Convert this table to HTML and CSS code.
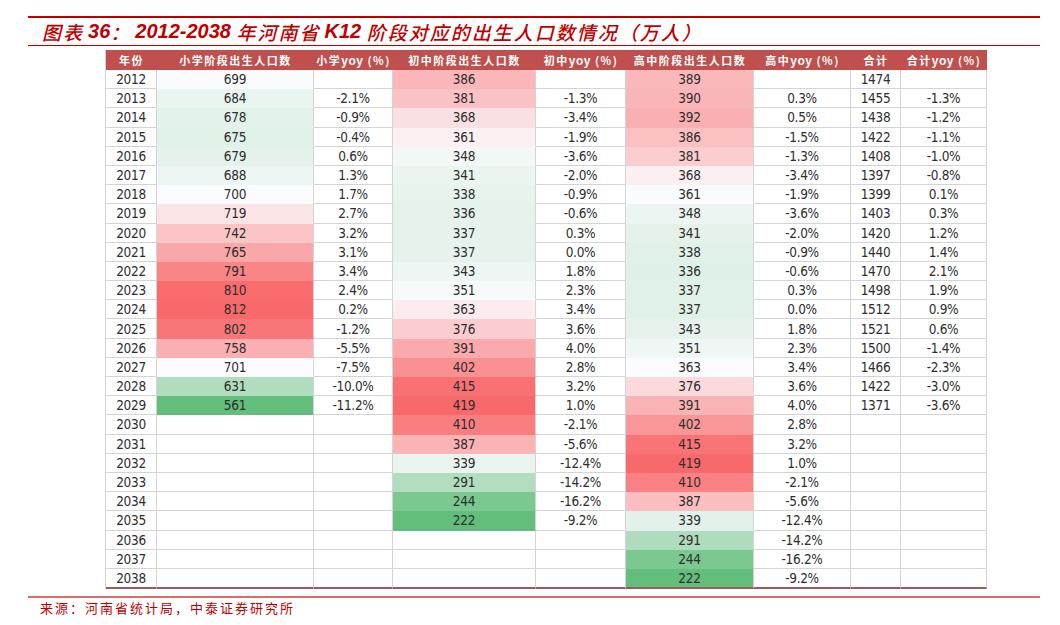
FILE: index.html
```html
<!DOCTYPE html>
<html lang="zh-CN">
<head>
<meta charset="utf-8">
<title>图表36</title>
<link rel="stylesheet" href="styles.css">
</head>
<body>
<div class="page">
  <div class="rule-top"></div>
  <h1 class="title"><span class="cn">图表</span><span class="lat">36</span><span class="cn">：</span><span class="lat">2012-2038 </span><span class="cn">年河南省</span><span class="lat">K12 </span><span class="cn">阶段对应的出生人口数情况（万人）</span></h1>
  <div class="rule-title"></div>
  <div class="table-wrap">
    <table class="grid" id="grid">
      <colgroup>
        <col class="c-year"><col class="c-pri"><col class="c-priy"><col class="c-mid"><col class="c-midy"><col class="c-high"><col class="c-highy"><col class="c-tot"><col class="c-toty">
      </colgroup>
      <thead>
        <tr><th>年份</th><th>小学阶段出生人口数</th><th>小学<span class="y">yoy</span> (%)</th><th>初中阶段出生人口数</th><th>初中<span class="y">yoy</span> (%)</th><th>高中阶段出生人口数</th><th>高中<span class="y">yoy</span> (%)</th><th>合计</th><th>合计<span class="y">yoy</span> (%)</th></tr>
      </thead>
      <tbody>
        <tr><td>2012</td><td>699</td><td></td><td>386</td><td></td><td>389</td><td></td><td>1474</td><td></td></tr>
        <tr><td>2013</td><td>684</td><td>-2.1%</td><td>381</td><td>-1.3%</td><td>390</td><td>0.3%</td><td>1455</td><td>-1.3%</td></tr>
        <tr><td>2014</td><td>678</td><td>-0.9%</td><td>368</td><td>-3.4%</td><td>392</td><td>0.5%</td><td>1438</td><td>-1.2%</td></tr>
        <tr><td>2015</td><td>675</td><td>-0.4%</td><td>361</td><td>-1.9%</td><td>386</td><td>-1.5%</td><td>1422</td><td>-1.1%</td></tr>
        <tr><td>2016</td><td>679</td><td>0.6%</td><td>348</td><td>-3.6%</td><td>381</td><td>-1.3%</td><td>1408</td><td>-1.0%</td></tr>
        <tr><td>2017</td><td>688</td><td>1.3%</td><td>341</td><td>-2.0%</td><td>368</td><td>-3.4%</td><td>1397</td><td>-0.8%</td></tr>
        <tr><td>2018</td><td>700</td><td>1.7%</td><td>338</td><td>-0.9%</td><td>361</td><td>-1.9%</td><td>1399</td><td>0.1%</td></tr>
        <tr><td>2019</td><td>719</td><td>2.7%</td><td>336</td><td>-0.6%</td><td>348</td><td>-3.6%</td><td>1403</td><td>0.3%</td></tr>
        <tr><td>2020</td><td>742</td><td>3.2%</td><td>337</td><td>0.3%</td><td>341</td><td>-2.0%</td><td>1420</td><td>1.2%</td></tr>
        <tr><td>2021</td><td>765</td><td>3.1%</td><td>337</td><td>0.0%</td><td>338</td><td>-0.9%</td><td>1440</td><td>1.4%</td></tr>
        <tr><td>2022</td><td>791</td><td>3.4%</td><td>343</td><td>1.8%</td><td>336</td><td>-0.6%</td><td>1470</td><td>2.1%</td></tr>
        <tr><td>2023</td><td>810</td><td>2.4%</td><td>351</td><td>2.3%</td><td>337</td><td>0.3%</td><td>1498</td><td>1.9%</td></tr>
        <tr><td>2024</td><td>812</td><td>0.2%</td><td>363</td><td>3.4%</td><td>337</td><td>0.0%</td><td>1512</td><td>0.9%</td></tr>
        <tr><td>2025</td><td>802</td><td>-1.2%</td><td>376</td><td>3.6%</td><td>343</td><td>1.8%</td><td>1521</td><td>0.6%</td></tr>
        <tr><td>2026</td><td>758</td><td>-5.5%</td><td>391</td><td>4.0%</td><td>351</td><td>2.3%</td><td>1500</td><td>-1.4%</td></tr>
        <tr><td>2027</td><td>701</td><td>-7.5%</td><td>402</td><td>2.8%</td><td>363</td><td>3.4%</td><td>1466</td><td>-2.3%</td></tr>
        <tr><td>2028</td><td>631</td><td>-10.0%</td><td>415</td><td>3.2%</td><td>376</td><td>3.6%</td><td>1422</td><td>-3.0%</td></tr>
        <tr><td>2029</td><td>561</td><td>-11.2%</td><td>419</td><td>1.0%</td><td>391</td><td>4.0%</td><td>1371</td><td>-3.6%</td></tr>
        <tr><td>2030</td><td></td><td></td><td>410</td><td>-2.1%</td><td>402</td><td>2.8%</td><td></td><td></td></tr>
        <tr><td>2031</td><td></td><td></td><td>387</td><td>-5.6%</td><td>415</td><td>3.2%</td><td></td><td></td></tr>
        <tr><td>2032</td><td></td><td></td><td>339</td><td>-12.4%</td><td>419</td><td>1.0%</td><td></td><td></td></tr>
        <tr><td>2033</td><td></td><td></td><td>291</td><td>-14.2%</td><td>410</td><td>-2.1%</td><td></td><td></td></tr>
        <tr><td>2034</td><td></td><td></td><td>244</td><td>-16.2%</td><td>387</td><td>-5.6%</td><td></td><td></td></tr>
        <tr><td>2035</td><td></td><td></td><td>222</td><td>-9.2%</td><td>339</td><td>-12.4%</td><td></td><td></td></tr>
        <tr><td>2036</td><td></td><td></td><td></td><td></td><td>291</td><td>-14.2%</td><td></td><td></td></tr>
        <tr><td>2037</td><td></td><td></td><td></td><td></td><td>244</td><td>-16.2%</td><td></td><td></td></tr>
        <tr><td>2038</td><td></td><td></td><td></td><td></td><td>222</td><td>-9.2%</td><td></td><td></td></tr>
      </tbody>
    </table>
  </div>
  <div class="rule-source"></div>
  <p class="source">来源：河南省统计局，中泰证券研究所</p>
</div>
<script src="script.js"></script>
</body>
</html>
```

FILE: styles.css
```css
html, body {
  margin: 0;
  padding: 0;
  background: #ffffff;
}

.page {
  width: 1012px;
  padding: 16px 0 0 28px;
}

.rule-top {
  height: 2px;
  background: #c00000;
}

.title {
  margin: 0;
  height: 27px;
  padding-left: 14px;
  display: flex;
  align-items: center;
  color: #c00000;
  font-size: 20px;
  font-weight: normal;
  white-space: nowrap;
}

.title .cn {
  font-family: "Noto Sans CJK SC", sans-serif;
  font-style: italic;
  font-weight: 500;
  font-size: 19px;
  letter-spacing: 2px;
}

.title .lat {
  font-family: "Liberation Sans", Arial, sans-serif;
  font-style: italic;
  font-weight: bold;
  white-space: pre;
  padding-left: 4px;
}

.rule-title {
  height: 1px;
  background: #c00000;
}

.table-wrap {
  margin: 4px 0 0 77px;
}

.grid {
  border-collapse: separate;
  border-spacing: 0;
  table-layout: fixed;
  width: 881px;
  border-left: 1px solid #d4d4d4;
  font-family: "DejaVu Sans Condensed", "Liberation Sans", sans-serif;
  font-size: 13.5px;
  letter-spacing: -0.3px;
  color: #2e2e2e;
}

.c-year { width: 51px; }
.c-pri { width: 157px; }
.c-priy { width: 79px; }
.c-mid { width: 143px; }
.c-midy { width: 90px; }
.c-high { width: 128px; }
.c-highy { width: 97px; }
.c-tot { width: 50px; }
.c-toty { width: 86px; }

.grid th {
  height: 20px;
  padding: 0;
  background: #c0504d;
  color: #ffffff;
  font-family: "Noto Sans CJK SC", sans-serif;
  font-weight: bold;
  font-size: 11px;
  letter-spacing: 1.5px;
  text-align: center;
  white-space: nowrap;
  overflow: hidden;
}

.grid th .y {
  font-family: "Liberation Sans", Arial, sans-serif;
  font-weight: bold;
  font-size: 12px;
  letter-spacing: 0.5px;
}

.grid td {
  height: 18.2px;
  padding: 0;
  text-align: center;
  line-height: 18px;
  border-right: 1px solid #d4d4d4;
  border-bottom: 1px solid #d4d4d4;
  white-space: nowrap;
}

.grid tbody tr:last-child td {
  border-bottom: 2px solid #9c5a5a;
}

.rule-source {
  margin-top: 7px;
  height: 2px;
  background: #e06a6a;
}

.source {
  margin: 2px 0 0 12px;
  color: #c00000;
  font-family: "Noto Sans CJK SC", sans-serif;
  font-size: 13px;
  letter-spacing: 2px;
  line-height: 16px;
}
```

FILE: script.js
```js
(function () {
  var green = [99, 190, 123];
  var white = [252, 252, 255];
  var red = [248, 105, 107];
  var rows = document.querySelectorAll('#grid tbody tr');
  [1, 3, 5].forEach(function (col) {
    var cells = [];
    rows.forEach(function (r) {
      var c = r.children[col];
      var t = c.textContent.trim();
      if (t !== '') cells.push({ cell: c, v: parseFloat(t) });
    });
    var vals = cells.map(function (x) { return x.v; }).sort(function (a, b) { return a - b; });
    var n = vals.length;
    var min = vals[0], max = vals[n - 1];
    var mid = n % 2 ? vals[(n - 1) / 2] : (vals[n / 2 - 1] + vals[n / 2]) / 2;
    cells.forEach(function (x) {
      var from, to, t;
      if (x.v <= mid) {
        from = green; to = white; t = mid === min ? 1 : (x.v - min) / (mid - min);
      } else {
        from = white; to = red; t = max === mid ? 0 : (x.v - mid) / (max - mid);
      }
      var rgb = from.map(function (f, i) { return Math.round(f + (to[i] - f) * t); });
      var color = 'rgb(' + rgb.join(',') + ')';
      x.cell.style.backgroundColor = color;
      if (x.cell.parentNode !== rows[rows.length - 1]) {
        x.cell.style.borderBottomColor = color;
      }
    });
  });
})();
```
